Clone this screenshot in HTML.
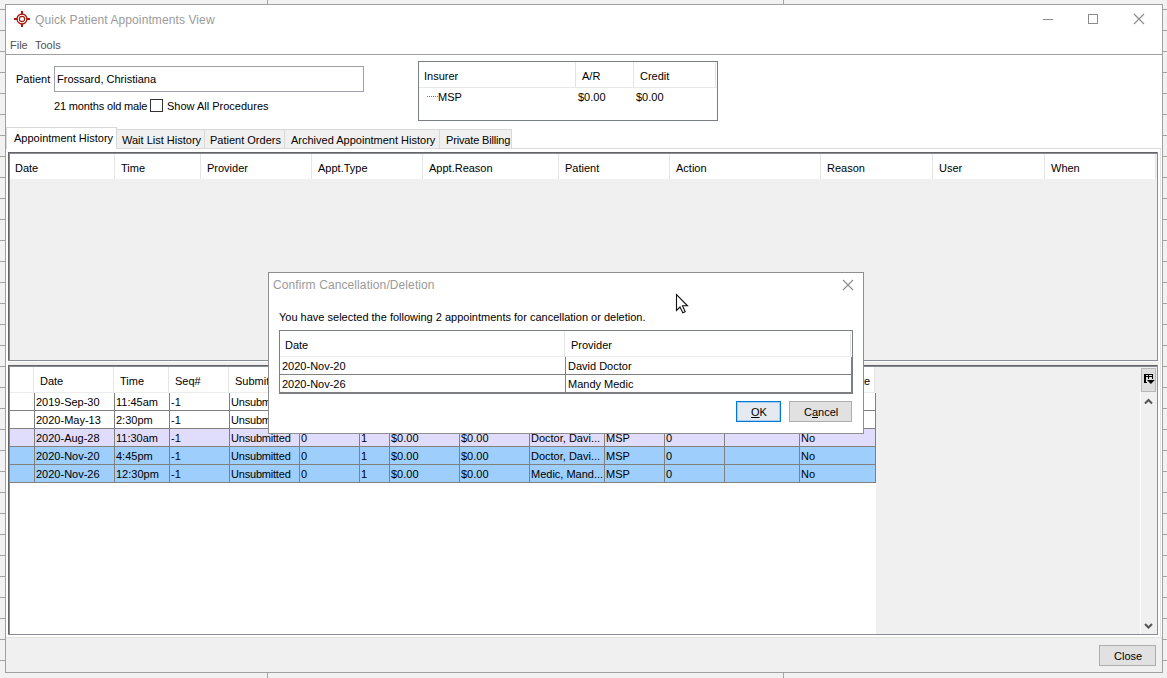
<!DOCTYPE html>
<html><head><meta charset="utf-8"><title>Quick Patient Appointments View</title>
<style>
html,body{margin:0;padding:0}
body{width:1167px;height:678px;overflow:hidden;position:relative;background:#f2f2f2;font-family:"Liberation Sans",sans-serif}
.r{position:absolute}
.t{position:absolute;white-space:nowrap;font-family:"Liberation Sans",sans-serif}
u{text-decoration:underline;text-underline-offset:1px}
</style></head><body>
<div class="r" style="left:0px;top:9px;width:1167px;height:1px;background:#a3a3a3"></div>
<div class="r" style="left:0px;top:30px;width:1167px;height:1px;background:#a3a3a3"></div>
<div class="r" style="left:0px;top:51px;width:1167px;height:1px;background:#a3a3a3"></div>
<div class="r" style="left:0px;top:72px;width:1167px;height:1px;background:#a3a3a3"></div>
<div class="r" style="left:0px;top:93px;width:1167px;height:1px;background:#a3a3a3"></div>
<div class="r" style="left:0px;top:114px;width:1167px;height:1px;background:#a3a3a3"></div>
<div class="r" style="left:0px;top:135px;width:1167px;height:1px;background:#a3a3a3"></div>
<div class="r" style="left:0px;top:156px;width:1167px;height:1px;background:#a3a3a3"></div>
<div class="r" style="left:0px;top:177px;width:1167px;height:1px;background:#a3a3a3"></div>
<div class="r" style="left:0px;top:198px;width:1167px;height:1px;background:#a3a3a3"></div>
<div class="r" style="left:0px;top:219px;width:1167px;height:1px;background:#a3a3a3"></div>
<div class="r" style="left:0px;top:240px;width:1167px;height:1px;background:#a3a3a3"></div>
<div class="r" style="left:0px;top:261px;width:1167px;height:1px;background:#a3a3a3"></div>
<div class="r" style="left:0px;top:282px;width:1167px;height:1px;background:#a3a3a3"></div>
<div class="r" style="left:0px;top:303px;width:1167px;height:1px;background:#a3a3a3"></div>
<div class="r" style="left:0px;top:324px;width:1167px;height:1px;background:#a3a3a3"></div>
<div class="r" style="left:0px;top:345px;width:1167px;height:1px;background:#a3a3a3"></div>
<div class="r" style="left:0px;top:366px;width:1167px;height:1px;background:#a3a3a3"></div>
<div class="r" style="left:0px;top:387px;width:1167px;height:1px;background:#a3a3a3"></div>
<div class="r" style="left:0px;top:408px;width:1167px;height:1px;background:#a3a3a3"></div>
<div class="r" style="left:0px;top:429px;width:1167px;height:1px;background:#a3a3a3"></div>
<div class="r" style="left:0px;top:450px;width:1167px;height:1px;background:#a3a3a3"></div>
<div class="r" style="left:0px;top:471px;width:1167px;height:1px;background:#a3a3a3"></div>
<div class="r" style="left:0px;top:492px;width:1167px;height:1px;background:#a3a3a3"></div>
<div class="r" style="left:0px;top:513px;width:1167px;height:1px;background:#a3a3a3"></div>
<div class="r" style="left:0px;top:534px;width:1167px;height:1px;background:#a3a3a3"></div>
<div class="r" style="left:0px;top:555px;width:1167px;height:1px;background:#a3a3a3"></div>
<div class="r" style="left:0px;top:576px;width:1167px;height:1px;background:#a3a3a3"></div>
<div class="r" style="left:0px;top:597px;width:1167px;height:1px;background:#a3a3a3"></div>
<div class="r" style="left:0px;top:618px;width:1167px;height:1px;background:#a3a3a3"></div>
<div class="r" style="left:0px;top:639px;width:1167px;height:1px;background:#a3a3a3"></div>
<div class="r" style="left:0px;top:660px;width:1167px;height:1px;background:#a3a3a3"></div>
<div class="r" style="left:267px;top:0px;width:1px;height:678px;background:#a3a3a3"></div>
<div class="r" style="left:783px;top:0px;width:1px;height:678px;background:#a3a3a3"></div>
<div class="r" style="left:5px;top:4px;width:1158px;height:669px;background:#fff;border:1px solid #a0a0a0;box-sizing:border-box"></div>
<div class="r" style="left:6px;top:637px;width:1156px;height:35px;background:#f0f0f0"></div>
<div class="r" style="left:6px;top:637px;width:1156px;height:1px;background:#e3e3e3"></div>
<div class="r" style="left:1160px;top:148px;width:1px;height:490px;background:#e6e6e6"></div>
<svg class="r" style="left:14px;top:11px" width="16" height="16" viewBox="0 0 16 16">
<g fill="none" stroke="#a81a12">
<circle cx="8" cy="8" r="5" stroke-width="1.3"/>
<circle cx="8" cy="8" r="2.6" stroke-width="1.1"/>
</g>
<g fill="#a81a12"><rect x="7" y="0" width="2" height="3.5"/><rect x="7" y="12.5" width="2" height="3.5"/>
<rect x="0" y="7" width="3.5" height="2"/><rect x="12.5" y="7" width="3.5" height="2"/></g>
</svg>
<div class="t" style="left:35px;top:13px;font-size:12px;line-height:14px;color:#9a9a9a;letter-spacing:0.1px">Quick Patient Appointments View</div>
<div class="r" style="left:1043px;top:19px;width:10px;height:1px;background:#8c8c8c"></div>
<div class="r" style="left:1088px;top:14px;width:10px;height:10px;border:1px solid #8c8c8c;box-sizing:border-box"></div>
<svg class="r" style="left:1133px;top:13px" width="12" height="12" viewBox="0 0 12 12">
<path d="M1 1L11 11M11 1L1 11" stroke="#8c8c8c" stroke-width="1.1"/></svg>
<div class="t" style="left:10px;top:39px;font-size:11px;line-height:13px;color:#505050;">File</div>
<div class="t" style="left:35px;top:39px;font-size:11px;line-height:13px;color:#505050;">Tools</div>
<div class="r" style="left:6px;top:54px;width:1156px;height:1px;background:#a0a0a0"></div>
<div class="t" style="left:16px;top:73px;font-size:11px;line-height:13px;color:#000;">Patient</div>
<div class="r" style="left:54px;top:66px;width:310px;height:26px;border:1px solid #9ea2a8;box-sizing:border-box;background:#fff"></div>
<div class="t" style="left:57px;top:73px;font-size:11px;line-height:13px;color:#000;">Frossard, Christiana</div>
<div class="t" style="left:54px;top:100px;font-size:11px;line-height:13px;color:#000;letter-spacing:-0.15px">21 months old male</div>
<div class="r" style="left:150px;top:99px;width:13px;height:13px;border:1px solid #333;box-sizing:border-box;background:#fff"></div>
<div class="t" style="left:167px;top:100px;font-size:11px;line-height:13px;color:#000;">Show All Procedures</div>
<div class="r" style="left:418px;top:61px;width:300px;height:60px;border:1px solid #7a7f87;box-sizing:border-box;background:#fff"></div>
<div class="r" style="left:419px;top:87px;width:298px;height:1px;background:#e8e8e8"></div>
<div class="r" style="left:575px;top:62px;width:1px;height:25px;background:#e3e3e3"></div>
<div class="r" style="left:633px;top:62px;width:1px;height:25px;background:#e3e3e3"></div>
<div class="r" style="left:715px;top:62px;width:1px;height:25px;background:#e3e3e3"></div>
<div class="t" style="left:424px;top:70px;font-size:11px;line-height:13px;color:#000;">Insurer</div>
<div class="t" style="left:582px;top:70px;font-size:11px;line-height:13px;color:#000;">A/R</div>
<div class="t" style="left:640px;top:70px;font-size:11px;line-height:13px;color:#000;">Credit</div>
<div class="r" style="left:427px;top:96px;width:11px;height:1px;background-image:linear-gradient(90deg,#777 50%,transparent 50%);background-size:2px 1px"></div>
<div class="t" style="left:438px;top:91px;font-size:11px;line-height:13px;color:#000;">MSP</div>
<div class="t" style="left:578px;top:91px;font-size:11px;line-height:13px;color:#000;">$0.00</div>
<div class="t" style="left:636px;top:91px;font-size:11px;line-height:13px;color:#000;">$0.00</div>
<div class="r" style="left:6px;top:148px;width:1155px;height:1px;background:#d9d9d9"></div>
<div class="r" style="left:116px;top:129px;width:89px;height:20px;background:#f0f0f0;border:1px solid #d9d9d9;box-sizing:border-box"></div>
<div class="t" style="left:122px;top:134px;font-size:11px;line-height:13px;color:#000;">Wait List History</div>
<div class="r" style="left:204px;top:129px;width:81px;height:20px;background:#f0f0f0;border:1px solid #d9d9d9;box-sizing:border-box"></div>
<div class="t" style="left:210px;top:134px;font-size:11px;line-height:13px;color:#000;">Patient Orders</div>
<div class="r" style="left:284px;top:129px;width:156px;height:20px;background:#f0f0f0;border:1px solid #d9d9d9;box-sizing:border-box"></div>
<div class="t" style="left:291px;top:134px;font-size:11px;line-height:13px;color:#000;">Archived Appointment History</div>
<div class="r" style="left:439px;top:129px;width:73px;height:20px;background:#f0f0f0;border:1px solid #d9d9d9;box-sizing:border-box"></div>
<div class="t" style="left:446px;top:134px;font-size:11px;line-height:13px;color:#000;letter-spacing:-0.16px">Private Billing</div>
<div class="r" style="left:6px;top:127px;width:111px;height:22px;background:#fff;border:1px solid #d9d9d9;border-bottom:none;box-sizing:border-box"></div>
<div class="t" style="left:14px;top:132px;font-size:11px;line-height:13px;color:#000;">Appointment History</div>
<div class="r" style="left:8px;top:152px;width:1150px;height:209px;background:#f0f0f0"></div>
<div class="r" style="left:8px;top:152px;width:1150px;height:1px;background:#646464"></div>
<div class="r" style="left:9px;top:153px;width:1148px;height:1px;background:#878d96"></div>
<div class="r" style="left:8px;top:152px;width:1px;height:209px;background:#646464"></div>
<div class="r" style="left:9px;top:153px;width:1px;height:207px;background:#878d96"></div>
<div class="r" style="left:1157px;top:152px;width:1px;height:209px;background:#878d96"></div>
<div class="r" style="left:8px;top:360px;width:1150px;height:1px;background:#878d96"></div>
<div class="r" style="left:1158px;top:152px;width:1px;height:210px;background:#fff"></div>
<div class="r" style="left:8px;top:361px;width:1151px;height:1px;background:#fff"></div>
<div class="r" style="left:10px;top:154px;width:1146px;height:25px;background:#fff"></div>
<div class="r" style="left:114px;top:154px;width:1px;height:25px;background:#e5e5e5"></div>
<div class="r" style="left:200px;top:154px;width:1px;height:25px;background:#e5e5e5"></div>
<div class="r" style="left:311px;top:154px;width:1px;height:25px;background:#e5e5e5"></div>
<div class="r" style="left:422px;top:154px;width:1px;height:25px;background:#e5e5e5"></div>
<div class="r" style="left:558px;top:154px;width:1px;height:25px;background:#e5e5e5"></div>
<div class="r" style="left:669px;top:154px;width:1px;height:25px;background:#e5e5e5"></div>
<div class="r" style="left:820px;top:154px;width:1px;height:25px;background:#e5e5e5"></div>
<div class="r" style="left:932px;top:154px;width:1px;height:25px;background:#e5e5e5"></div>
<div class="r" style="left:1044px;top:154px;width:1px;height:25px;background:#e5e5e5"></div>
<div class="r" style="left:1155px;top:154px;width:1px;height:25px;background:#e5e5e5"></div>
<div class="t" style="left:15px;top:162px;font-size:11px;line-height:13px;color:#000;">Date</div>
<div class="t" style="left:121px;top:162px;font-size:11px;line-height:13px;color:#000;">Time</div>
<div class="t" style="left:207px;top:162px;font-size:11px;line-height:13px;color:#000;">Provider</div>
<div class="t" style="left:318px;top:162px;font-size:11px;line-height:13px;color:#000;">Appt.Type</div>
<div class="t" style="left:429px;top:162px;font-size:11px;line-height:13px;color:#000;">Appt.Reason</div>
<div class="t" style="left:565px;top:162px;font-size:11px;line-height:13px;color:#000;">Patient</div>
<div class="t" style="left:676px;top:162px;font-size:11px;line-height:13px;color:#000;">Action</div>
<div class="t" style="left:827px;top:162px;font-size:11px;line-height:13px;color:#000;">Reason</div>
<div class="t" style="left:939px;top:162px;font-size:11px;line-height:13px;color:#000;">User</div>
<div class="t" style="left:1051px;top:162px;font-size:11px;line-height:13px;color:#000;">When</div>
<div class="r" style="left:8px;top:362px;width:1151px;height:3px;background:#f0f0f0"></div>
<div class="r" style="left:8px;top:365px;width:1150px;height:270px;background:#f0f0f0"></div>
<div class="r" style="left:8px;top:365px;width:1150px;height:1px;background:#646464"></div>
<div class="r" style="left:9px;top:366px;width:1148px;height:1px;background:#878d96"></div>
<div class="r" style="left:8px;top:365px;width:1px;height:270px;background:#646464"></div>
<div class="r" style="left:9px;top:366px;width:1px;height:268px;background:#878d96"></div>
<div class="r" style="left:1157px;top:365px;width:1px;height:270px;background:#878d96"></div>
<div class="r" style="left:8px;top:634px;width:1150px;height:1px;background:#878d96"></div>
<div class="r" style="left:1158px;top:365px;width:1px;height:271px;background:#fff"></div>
<div class="r" style="left:8px;top:635px;width:1151px;height:1px;background:#fff"></div>
<div class="r" style="left:10px;top:367px;width:865px;height:25px;background:#fff"></div>
<div class="r" style="left:10px;top:392px;width:865px;height:1px;background:#ececec"></div>
<div class="r" style="left:33px;top:367px;width:1px;height:25px;background:#e5e5e5"></div>
<div class="r" style="left:113px;top:367px;width:1px;height:25px;background:#e5e5e5"></div>
<div class="r" style="left:168px;top:367px;width:1px;height:25px;background:#e5e5e5"></div>
<div class="r" style="left:228px;top:367px;width:1px;height:25px;background:#e5e5e5"></div>
<div class="r" style="left:298px;top:367px;width:1px;height:25px;background:#e5e5e5"></div>
<div class="r" style="left:358px;top:367px;width:1px;height:25px;background:#e5e5e5"></div>
<div class="r" style="left:388px;top:367px;width:1px;height:25px;background:#e5e5e5"></div>
<div class="r" style="left:458px;top:367px;width:1px;height:25px;background:#e5e5e5"></div>
<div class="r" style="left:528px;top:367px;width:1px;height:25px;background:#e5e5e5"></div>
<div class="r" style="left:603px;top:367px;width:1px;height:25px;background:#e5e5e5"></div>
<div class="r" style="left:663px;top:367px;width:1px;height:25px;background:#e5e5e5"></div>
<div class="r" style="left:723px;top:367px;width:1px;height:25px;background:#e5e5e5"></div>
<div class="r" style="left:798px;top:367px;width:1px;height:25px;background:#e5e5e5"></div>
<div class="r" style="left:874px;top:367px;width:1px;height:25px;background:#e5e5e5"></div>
<div class="t" style="left:40px;top:375px;font-size:11px;line-height:13px;color:#000;">Date</div>
<div class="t" style="left:120px;top:375px;font-size:11px;line-height:13px;color:#000;">Time</div>
<div class="t" style="left:175px;top:375px;font-size:11px;line-height:13px;color:#000;">Seq#</div>
<div class="t" style="left:235px;top:375px;font-size:11px;line-height:13px;color:#000;">Submit</div>
<div class="t" style="left:861px;top:375px;font-size:11px;line-height:13px;color:#000;">te</div>
<div class="r" style="left:10px;top:393px;width:866px;height:241px;background:#fff"></div>
<div class="r" style="left:10px;top:393px;width:865px;height:17px;background:#fff"></div>
<div class="r" style="left:10px;top:410px;width:866px;height:1px;background:#808080"></div>
<div class="t" style="left:36px;top:396px;font-size:11px;line-height:13px;color:#000;">2019-Sep-30</div>
<div class="t" style="left:116px;top:396px;font-size:11px;line-height:13px;color:#000;">11:45am</div>
<div class="t" style="left:171px;top:396px;font-size:11px;line-height:13px;color:#000;">-1</div>
<div class="t" style="left:231px;top:396px;font-size:11px;line-height:13px;color:#000;letter-spacing:-0.2px">Unsubmitted</div>
<div class="t" style="left:301px;top:396px;font-size:11px;line-height:13px;color:#000;">0</div>
<div class="t" style="left:361px;top:396px;font-size:11px;line-height:13px;color:#000;">1</div>
<div class="t" style="left:391px;top:396px;font-size:11px;line-height:13px;color:#000;">$0.00</div>
<div class="t" style="left:461px;top:396px;font-size:11px;line-height:13px;color:#000;">$0.00</div>
<div class="t" style="left:531px;top:396px;font-size:11px;line-height:13px;color:#000;">Doctor, Davi...</div>
<div class="t" style="left:606px;top:396px;font-size:11px;line-height:13px;color:#000;">MSP</div>
<div class="t" style="left:666px;top:396px;font-size:11px;line-height:13px;color:#000;">0</div>
<div class="t" style="left:801px;top:396px;font-size:11px;line-height:13px;color:#000;">No</div>
<div class="r" style="left:10px;top:411px;width:865px;height:17px;background:#fff"></div>
<div class="r" style="left:10px;top:428px;width:866px;height:1px;background:#808080"></div>
<div class="t" style="left:36px;top:414px;font-size:11px;line-height:13px;color:#000;">2020-May-13</div>
<div class="t" style="left:116px;top:414px;font-size:11px;line-height:13px;color:#000;">2:30pm</div>
<div class="t" style="left:171px;top:414px;font-size:11px;line-height:13px;color:#000;">-1</div>
<div class="t" style="left:231px;top:414px;font-size:11px;line-height:13px;color:#000;letter-spacing:-0.2px">Unsubmitted</div>
<div class="t" style="left:301px;top:414px;font-size:11px;line-height:13px;color:#000;">0</div>
<div class="t" style="left:361px;top:414px;font-size:11px;line-height:13px;color:#000;">1</div>
<div class="t" style="left:391px;top:414px;font-size:11px;line-height:13px;color:#000;">$0.00</div>
<div class="t" style="left:461px;top:414px;font-size:11px;line-height:13px;color:#000;">$0.00</div>
<div class="t" style="left:531px;top:414px;font-size:11px;line-height:13px;color:#000;">Doctor, Davi...</div>
<div class="t" style="left:606px;top:414px;font-size:11px;line-height:13px;color:#000;">MSP</div>
<div class="t" style="left:666px;top:414px;font-size:11px;line-height:13px;color:#000;">0</div>
<div class="t" style="left:801px;top:414px;font-size:11px;line-height:13px;color:#000;">No</div>
<div class="r" style="left:10px;top:429px;width:865px;height:17px;background:#e0dcfb"></div>
<div class="r" style="left:10px;top:446px;width:866px;height:1px;background:#808080"></div>
<div class="t" style="left:36px;top:432px;font-size:11px;line-height:13px;color:#000;">2020-Aug-28</div>
<div class="t" style="left:116px;top:432px;font-size:11px;line-height:13px;color:#000;">11:30am</div>
<div class="t" style="left:171px;top:432px;font-size:11px;line-height:13px;color:#000;">-1</div>
<div class="t" style="left:231px;top:432px;font-size:11px;line-height:13px;color:#000;letter-spacing:-0.2px">Unsubmitted</div>
<div class="t" style="left:301px;top:432px;font-size:11px;line-height:13px;color:#000;">0</div>
<div class="t" style="left:361px;top:432px;font-size:11px;line-height:13px;color:#000;">1</div>
<div class="t" style="left:391px;top:432px;font-size:11px;line-height:13px;color:#000;">$0.00</div>
<div class="t" style="left:461px;top:432px;font-size:11px;line-height:13px;color:#000;">$0.00</div>
<div class="t" style="left:531px;top:432px;font-size:11px;line-height:13px;color:#000;">Doctor, Davi...</div>
<div class="t" style="left:606px;top:432px;font-size:11px;line-height:13px;color:#000;">MSP</div>
<div class="t" style="left:666px;top:432px;font-size:11px;line-height:13px;color:#000;">0</div>
<div class="t" style="left:801px;top:432px;font-size:11px;line-height:13px;color:#000;">No</div>
<div class="r" style="left:10px;top:447px;width:865px;height:17px;background:#9dcefc"></div>
<div class="r" style="left:10px;top:464px;width:866px;height:1px;background:#808080"></div>
<div class="t" style="left:36px;top:450px;font-size:11px;line-height:13px;color:#000;">2020-Nov-20</div>
<div class="t" style="left:116px;top:450px;font-size:11px;line-height:13px;color:#000;">4:45pm</div>
<div class="t" style="left:171px;top:450px;font-size:11px;line-height:13px;color:#000;">-1</div>
<div class="t" style="left:231px;top:450px;font-size:11px;line-height:13px;color:#000;letter-spacing:-0.2px">Unsubmitted</div>
<div class="t" style="left:301px;top:450px;font-size:11px;line-height:13px;color:#000;">0</div>
<div class="t" style="left:361px;top:450px;font-size:11px;line-height:13px;color:#000;">1</div>
<div class="t" style="left:391px;top:450px;font-size:11px;line-height:13px;color:#000;">$0.00</div>
<div class="t" style="left:461px;top:450px;font-size:11px;line-height:13px;color:#000;">$0.00</div>
<div class="t" style="left:531px;top:450px;font-size:11px;line-height:13px;color:#000;">Doctor, Davi...</div>
<div class="t" style="left:606px;top:450px;font-size:11px;line-height:13px;color:#000;">MSP</div>
<div class="t" style="left:666px;top:450px;font-size:11px;line-height:13px;color:#000;">0</div>
<div class="t" style="left:801px;top:450px;font-size:11px;line-height:13px;color:#000;">No</div>
<div class="r" style="left:10px;top:465px;width:865px;height:17px;background:#9dcefc"></div>
<div class="r" style="left:10px;top:482px;width:866px;height:1px;background:#808080"></div>
<div class="t" style="left:36px;top:468px;font-size:11px;line-height:13px;color:#000;">2020-Nov-26</div>
<div class="t" style="left:116px;top:468px;font-size:11px;line-height:13px;color:#000;">12:30pm</div>
<div class="t" style="left:171px;top:468px;font-size:11px;line-height:13px;color:#000;">-1</div>
<div class="t" style="left:231px;top:468px;font-size:11px;line-height:13px;color:#000;letter-spacing:-0.2px">Unsubmitted</div>
<div class="t" style="left:301px;top:468px;font-size:11px;line-height:13px;color:#000;">0</div>
<div class="t" style="left:361px;top:468px;font-size:11px;line-height:13px;color:#000;">1</div>
<div class="t" style="left:391px;top:468px;font-size:11px;line-height:13px;color:#000;">$0.00</div>
<div class="t" style="left:461px;top:468px;font-size:11px;line-height:13px;color:#000;">$0.00</div>
<div class="t" style="left:531px;top:468px;font-size:11px;line-height:13px;color:#000;">Medic, Mand...</div>
<div class="t" style="left:606px;top:468px;font-size:11px;line-height:13px;color:#000;">MSP</div>
<div class="t" style="left:666px;top:468px;font-size:11px;line-height:13px;color:#000;">0</div>
<div class="t" style="left:801px;top:468px;font-size:11px;line-height:13px;color:#000;">No</div>
<div class="r" style="left:34px;top:393px;width:1px;height:90px;background:#808080"></div>
<div class="r" style="left:114px;top:393px;width:1px;height:90px;background:#808080"></div>
<div class="r" style="left:169px;top:393px;width:1px;height:90px;background:#808080"></div>
<div class="r" style="left:229px;top:393px;width:1px;height:90px;background:#808080"></div>
<div class="r" style="left:299px;top:393px;width:1px;height:90px;background:#808080"></div>
<div class="r" style="left:359px;top:393px;width:1px;height:90px;background:#808080"></div>
<div class="r" style="left:389px;top:393px;width:1px;height:90px;background:#808080"></div>
<div class="r" style="left:459px;top:393px;width:1px;height:90px;background:#808080"></div>
<div class="r" style="left:529px;top:393px;width:1px;height:90px;background:#808080"></div>
<div class="r" style="left:604px;top:393px;width:1px;height:90px;background:#808080"></div>
<div class="r" style="left:664px;top:393px;width:1px;height:90px;background:#808080"></div>
<div class="r" style="left:724px;top:393px;width:1px;height:90px;background:#808080"></div>
<div class="r" style="left:799px;top:393px;width:1px;height:90px;background:#808080"></div>
<div class="r" style="left:875px;top:393px;width:1px;height:90px;background:#808080"></div>
<div class="r" style="left:1140px;top:392px;width:1px;height:242px;background:#fff"></div>
<div class="r" style="left:1141px;top:392px;width:16px;height:242px;background:#f0f0f0"></div>
<div class="r" style="left:1141px;top:368px;width:15px;height:24px;background:#dedede;border:1px solid #b8b8b8;box-sizing:border-box"></div>
<svg class="r" style="left:1143px;top:373px" width="13" height="13" viewBox="0 0 13 13" shape-rendering="crispEdges">
<rect x="1" y="1" width="9" height="3" fill="#000"/>
<rect x="2" y="2" width="3" height="1" fill="#dcdcdc"/><rect x="6" y="2" width="3" height="1" fill="#dcdcdc"/>
<rect x="1" y="1" width="2" height="9" fill="#000"/>
<rect x="5" y="1" width="1" height="5" fill="#000"/>
<rect x="9" y="1" width="1" height="5" fill="#000"/>
<rect x="1" y="9" width="3" height="1" fill="#000"/>
<path d="M4 7H11.8L7.9 11Z" fill="#000" shape-rendering="geometricPrecision"/></svg>
<svg class="r" style="left:1143px;top:397px" width="11" height="10" viewBox="0 0 11 10">
<path d="M2 6.5L5.5 3L9 6.5" fill="none" stroke="#555" stroke-width="2"/></svg>
<svg class="r" style="left:1143px;top:621px" width="11" height="10" viewBox="0 0 11 10">
<path d="M2 3L5.5 6.5L9 3" fill="none" stroke="#555" stroke-width="2"/></svg>
<div class="r" style="left:1099px;top:645px;width:57px;height:21px;background:#e1e1e1;border:1px solid #adadad;box-sizing:border-box"></div>
<div class="t" style="left:1114px;top:650px;font-size:11px;line-height:13px;color:#000;">Close</div>
<div class="r" style="left:268px;top:272px;width:596px;height:162px;background:#fff;border:1px solid #8f8f8f;box-sizing:border-box"></div>
<div class="t" style="left:273px;top:278px;font-size:12px;line-height:14px;color:#9a9a9a;letter-spacing:0.1px">Confirm Cancellation/Deletion</div>
<svg class="r" style="left:842px;top:279px" width="12" height="12" viewBox="0 0 12 12">
<path d="M1 1L11 11M11 1L1 11" stroke="#8c8c8c" stroke-width="1.1"/></svg>
<div class="t" style="left:279px;top:311px;font-size:11px;line-height:13px;color:#000;">You have selected the following 2 appointments for cancellation or deletion.</div>
<div class="r" style="left:279px;top:330px;width:574px;height:64px;border:1px solid #7a7f87;box-sizing:border-box;background:#fff"></div>
<div class="r" style="left:280px;top:356px;width:571px;height:1px;background:#ececec"></div>
<div class="r" style="left:564px;top:331px;width:1px;height:25px;background:#e5e5e5"></div>
<div class="r" style="left:850px;top:331px;width:1px;height:25px;background:#e5e5e5"></div>
<div class="t" style="left:285px;top:339px;font-size:11px;line-height:13px;color:#000;">Date</div>
<div class="t" style="left:571px;top:339px;font-size:11px;line-height:13px;color:#000;">Provider</div>
<div class="r" style="left:280px;top:374px;width:572px;height:1px;background:#808080"></div>
<div class="r" style="left:280px;top:392px;width:572px;height:1px;background:#808080"></div>
<div class="r" style="left:565px;top:357px;width:1px;height:36px;background:#808080"></div>
<div class="r" style="left:851px;top:357px;width:1px;height:36px;background:#808080"></div>
<div class="t" style="left:282px;top:360px;font-size:11px;line-height:13px;color:#000;">2020-Nov-20</div>
<div class="t" style="left:568px;top:360px;font-size:11px;line-height:13px;color:#000;">David Doctor</div>
<div class="t" style="left:282px;top:378px;font-size:11px;line-height:13px;color:#000;">2020-Nov-26</div>
<div class="t" style="left:568px;top:378px;font-size:11px;line-height:13px;color:#000;">Mandy Medic</div>
<div class="r" style="left:736px;top:401px;width:45px;height:21px;background:#e4eaf0;border:1px solid #0078d7;box-shadow:inset 0 0 0 1px #a9cdee;box-sizing:border-box"></div>
<div class="t" style="left:751px;top:406px;font-size:11px;line-height:13px;color:#000;"><u>O</u>K</div>
<div class="r" style="left:789px;top:401px;width:63px;height:21px;background:#e1e1e1;border:1px solid #adadad;box-sizing:border-box"></div>
<div class="t" style="left:804px;top:406px;font-size:11px;line-height:13px;color:#000;">C<u>a</u>ncel</div>
<svg class="r" style="left:675px;top:293px" width="16" height="22" viewBox="0 0 16 22">
<path d="M1.5 1.5V17.5L5 14L7.8 19.8L10.2 18.8L7.5 12.8H12.5Z" fill="#fff" stroke="#111" stroke-width="1.1" stroke-linejoin="miter"/></svg>
</body></html>
